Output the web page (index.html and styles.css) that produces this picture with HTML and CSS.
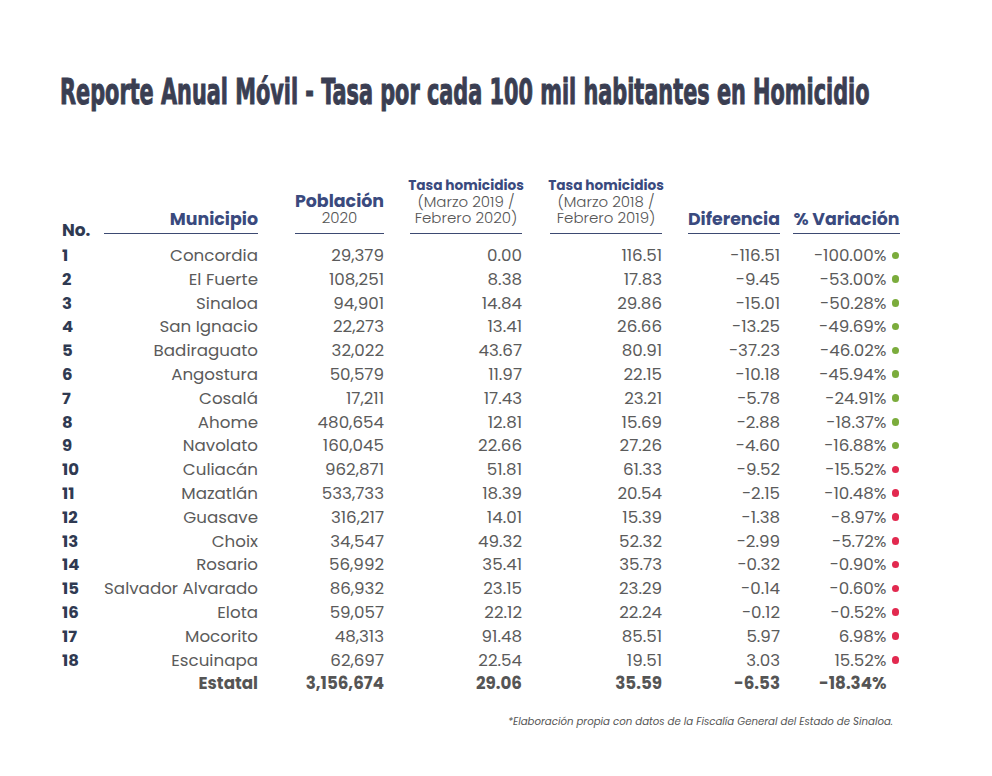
FILE: index.html
```html
<!DOCTYPE html>
<html lang="es">
<head>
<meta charset="utf-8">
<title>Reporte Anual Móvil</title>
<link rel="stylesheet" href="styles.css">
</head>
<body>
<div class="page">
  <h1 class="title"><span>Reporte Anual Móvil - Tasa por cada 100 mil habitantes en Homicidio</span></h1>

  <div class="table">
    <div class="row head">
      <div class="c no"><span class="h-no">No.</span></div>
      <div class="c mun"><div class="hl"><b>Municipio</b></div></div>
      <div class="c pob"><div class="hl ml37 center"><b>Población</b><span>2020</span></div></div>
      <div class="c t1"><div class="hl ml26 center"><b class="sm">Tasa homicidios</b><span>(Marzo 2019 /<br>Febrero 2020)</span></div></div>
      <div class="c t2"><div class="hl ml28 center"><b class="sm">Tasa homicidios</b><span>(Marzo 2018 /<br>Febrero 2019)</span></div></div>
      <div class="c dif"><div class="hl ml26 center"><b>Diferencia</b></div></div>
      <div class="c var"><div class="hl ml13 center"><b>% Variación</b></div></div>
    </div>

    <div class="row"><div class="c no">1</div><div class="c mun">Concordia</div><div class="c pob">29,379</div><div class="c t1">0.00</div><div class="c t2">116.51</div><div class="c dif">-116.51</div><div class="c var">-100.00%<i class="dot g"></i></div></div>
    <div class="row"><div class="c no">2</div><div class="c mun">El Fuerte</div><div class="c pob">108,251</div><div class="c t1">8.38</div><div class="c t2">17.83</div><div class="c dif">-9.45</div><div class="c var">-53.00%<i class="dot g"></i></div></div>
    <div class="row"><div class="c no">3</div><div class="c mun">Sinaloa</div><div class="c pob">94,901</div><div class="c t1">14.84</div><div class="c t2">29.86</div><div class="c dif">-15.01</div><div class="c var">-50.28%<i class="dot g"></i></div></div>
    <div class="row"><div class="c no">4</div><div class="c mun">San Ignacio</div><div class="c pob">22,273</div><div class="c t1">13.41</div><div class="c t2">26.66</div><div class="c dif">-13.25</div><div class="c var">-49.69%<i class="dot g"></i></div></div>
    <div class="row"><div class="c no">5</div><div class="c mun">Badiraguato</div><div class="c pob">32,022</div><div class="c t1">43.67</div><div class="c t2">80.91</div><div class="c dif">-37.23</div><div class="c var">-46.02%<i class="dot g"></i></div></div>
    <div class="row"><div class="c no">6</div><div class="c mun">Angostura</div><div class="c pob">50,579</div><div class="c t1">11.97</div><div class="c t2">22.15</div><div class="c dif">-10.18</div><div class="c var">-45.94%<i class="dot g"></i></div></div>
    <div class="row"><div class="c no">7</div><div class="c mun">Cosalá</div><div class="c pob">17,211</div><div class="c t1">17.43</div><div class="c t2">23.21</div><div class="c dif">-5.78</div><div class="c var">-24.91%<i class="dot g"></i></div></div>
    <div class="row"><div class="c no">8</div><div class="c mun">Ahome</div><div class="c pob">480,654</div><div class="c t1">12.81</div><div class="c t2">15.69</div><div class="c dif">-2.88</div><div class="c var">-18.37%<i class="dot g"></i></div></div>
    <div class="row"><div class="c no">9</div><div class="c mun">Navolato</div><div class="c pob">160,045</div><div class="c t1">22.66</div><div class="c t2">27.26</div><div class="c dif">-4.60</div><div class="c var">-16.88%<i class="dot g"></i></div></div>
    <div class="row"><div class="c no">10</div><div class="c mun">Culiacán</div><div class="c pob">962,871</div><div class="c t1">51.81</div><div class="c t2">61.33</div><div class="c dif">-9.52</div><div class="c var">-15.52%<i class="dot r"></i></div></div>
    <div class="row"><div class="c no">11</div><div class="c mun">Mazatlán</div><div class="c pob">533,733</div><div class="c t1">18.39</div><div class="c t2">20.54</div><div class="c dif">-2.15</div><div class="c var">-10.48%<i class="dot r"></i></div></div>
    <div class="row"><div class="c no">12</div><div class="c mun">Guasave</div><div class="c pob">316,217</div><div class="c t1">14.01</div><div class="c t2">15.39</div><div class="c dif">-1.38</div><div class="c var">-8.97%<i class="dot r"></i></div></div>
    <div class="row"><div class="c no">13</div><div class="c mun">Choix</div><div class="c pob">34,547</div><div class="c t1">49.32</div><div class="c t2">52.32</div><div class="c dif">-2.99</div><div class="c var">-5.72%<i class="dot r"></i></div></div>
    <div class="row"><div class="c no">14</div><div class="c mun">Rosario</div><div class="c pob">56,992</div><div class="c t1">35.41</div><div class="c t2">35.73</div><div class="c dif">-0.32</div><div class="c var">-0.90%<i class="dot r"></i></div></div>
    <div class="row"><div class="c no">15</div><div class="c mun">Salvador Alvarado</div><div class="c pob">86,932</div><div class="c t1">23.15</div><div class="c t2">23.29</div><div class="c dif">-0.14</div><div class="c var">-0.60%<i class="dot r"></i></div></div>
    <div class="row"><div class="c no">16</div><div class="c mun">Elota</div><div class="c pob">59,057</div><div class="c t1">22.12</div><div class="c t2">22.24</div><div class="c dif">-0.12</div><div class="c var">-0.52%<i class="dot r"></i></div></div>
    <div class="row"><div class="c no">17</div><div class="c mun">Mocorito</div><div class="c pob">48,313</div><div class="c t1">91.48</div><div class="c t2">85.51</div><div class="c dif">5.97</div><div class="c var">6.98%<i class="dot r"></i></div></div>
    <div class="row"><div class="c no">18</div><div class="c mun">Escuinapa</div><div class="c pob">62,697</div><div class="c t1">22.54</div><div class="c t2">19.51</div><div class="c dif">3.03</div><div class="c var">15.52%<i class="dot r"></i></div></div>
    <div class="row total"><div class="c no"></div><div class="c mun">Estatal</div><div class="c pob">3,156,674</div><div class="c t1">29.06</div><div class="c t2">35.59</div><div class="c dif">-6.53</div><div class="c var">-18.34%<i class="dot none"></i></div></div>
  </div>

  <p class="note">*Elaboración propia con datos de la Fiscalía General del Estado de Sinaloa.</p>
</div>
</body>
</html>
```

FILE: styles.css
```css
* { box-sizing: border-box; }
html, body { margin: 0; padding: 0; background: #ffffff; }
body {
  font-family: "Poppins", "Inter", "Open Sans", sans-serif;
  color: #5b5b5b;
}
.page {
  width: 992px;
  height: 776px;
  padding: 70px 0 0 60px;
  overflow: hidden;
}
.title {
  margin: 0;
  height: 44px;
  width: 880px;
  overflow: hidden;
  font-family: "DejaVu Sans Condensed", "Liberation Sans", sans-serif;
  font-weight: 700;
  font-size: 36px;
  line-height: 44px;
  color: #3a3e52;
  white-space: nowrap;
  -webkit-text-stroke: 1px #3a3e52;
}
.title span {
  display: inline-block;
  transform: scaleX(0.643);
  transform-origin: left center;
}
.table {
  margin-top: 64px;
  width: 840px;
}
.row {
  display: grid;
  grid-template-columns: 44px 154px 126px 138px 140px 118px 120px;
  height: 23.8px;
  line-height: 23.8px;
  font-size: 16.7px;
}
.c { text-align: right; white-space: nowrap; }
.no {
  text-align: left;
  padding-left: 2px;
  font-weight: 700;
  font-size: 16.5px;
  color: #2f3a52;
}
.dot {
  display: inline-block;
  width: 7.5px;
  height: 7.5px;
  border-radius: 50%;
  margin-left: 5px;
  margin-right: 1px;
  vertical-align: 2px;
}
.dot.g { background: #7bac3c; }
.dot.r { background: #e2294f; }
.dot.none { background: transparent; }

.head {
  height: auto;
  line-height: 16px;
  align-items: end;
  margin-bottom: 10px;
}
.h-no {
  display: block;
  font-size: 17px;
  color: #2f3a52;
  transform: translateY(4px);
  line-height: 16px;
}
.hl {
  border-bottom: 1.5px solid #3d4a72;
  padding-bottom: 5px;
  display: flex;
  flex-direction: column;
  align-items: flex-end;
}
.hl.center { align-items: center; text-align: center; }
.hl b {
  color: #3a4a7e;
  font-size: 17.4px;
  font-weight: 700;
  line-height: 18px;
}
.hl b.sm { font-size: 13.7px; line-height: 16px; }
.hl span {
  font-size: 15px;
  font-weight: 300;
  line-height: 16px;
  margin-bottom: 2px;
  color: #555555;
}
.ml37 { margin-left: 37px; }
.ml26 { margin-left: 26px; }
.ml28 { margin-left: 28px; }
.ml13 { margin-left: 13px; }

.total .c { font-weight: 700; color: #555555; }

.note {
  margin: 18px 0 0;
  width: 833px;
  text-align: right;
  font-size: 10.2px;
  font-style: italic;
  color: #555555;
}
```
